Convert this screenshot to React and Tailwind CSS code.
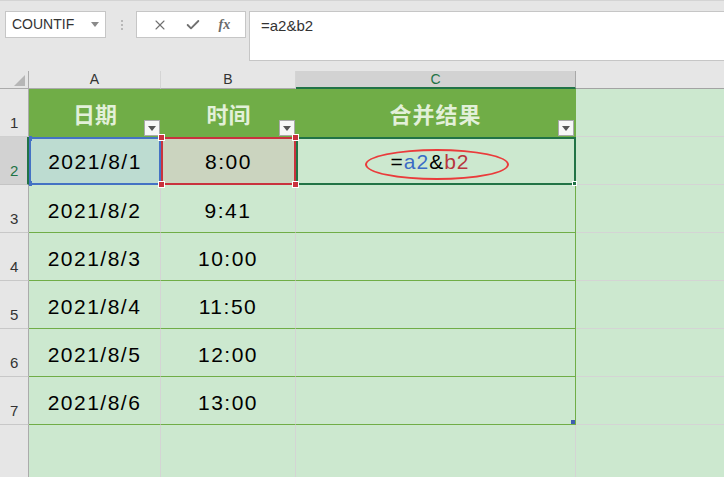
import React from "react";
import { X, Check } from "lucide-react";

const dataRows = [
  ["2021/8/2", "9:41"],
  ["2021/8/3", "10:00"],
  ["2021/8/4", "11:50"],
  ["2021/8/5", "12:00"],
  ["2021/8/6", "13:00"],
];

const FilterButton = () => (
  <div className="absolute right-[1px] bottom-[1px] w-[16px] h-[16px] bg-[#f7f7f7] border border-[#a9a9a9] flex items-center justify-center">
    <svg width="8" height="5" viewBox="0 0 8 5">
      <path d="M0 0h8L4 5z" fill="#555" />
    </svg>
  </div>
);

const RedHandle = ({ pos }) => (
  <div
    className={`absolute ${pos} w-[7px] h-[7px] bg-[#c9323e] border border-white z-20`}
  ></div>
);

const Toolbar = () => (
  <div className="h-[71px] shrink-0 bg-[#e6e6e6] border-t border-[#d4d4d4] flex items-start pt-[10px]">
    {/* name box */}
    <div className="ml-[5px] w-[101px] h-[27px] bg-white border border-[#c6c6c6] flex items-center justify-between pl-[6px] pr-[6px]">
      <span className="text-[14px] text-[#333]">COUNTIF</span>
      <svg width="8" height="5" viewBox="0 0 8 5">
        <path d="M0 0h8L4 5z" fill="#8a8a8a" />
      </svg>
    </div>
    <div className="ml-[15px] h-[27px] flex flex-col justify-center gap-[2px]">
      <div className="w-[2px] h-[2px] bg-[#b8b8b8]"></div>
      <div className="w-[2px] h-[2px] bg-[#b8b8b8]"></div>
      <div className="w-[2px] h-[2px] bg-[#b8b8b8]"></div>
    </div>
    {/* formula buttons */}
    <div className="ml-[13px] w-[110px] h-[27px] bg-white border border-[#c6c6c6] flex items-center justify-around px-[6px] text-[#707070]">
      <X size={16} strokeWidth={1.6} />
      <Check size={16} strokeWidth={2.8} />
      <span className="font-['Liberation_Serif',serif] italic font-bold text-[14px] text-[#6a6a6a]">
        fx
      </span>
    </div>
    {/* formula input */}
    <div className="ml-[3px] flex-1 h-[50px] bg-white border-l border-y border-[#c6c6c6] pl-[11px] pt-[3px] text-[15px] text-[#333]">
      =a2&amp;b2
    </div>
  </div>
);

const Sheet = () => (
  <div className="flex-1 grid grid-cols-[29px_132px_135px_280px_1fr] grid-rows-[18px_48px_48px_48px_48px_48px_48px_48px_1fr] text-[21px] text-black">
    {/* column headers */}
    <div className="bg-[#e6e6e6] border-r border-b border-[#ababab] flex items-end justify-end pr-[3px] pb-[2px]">
      <svg width="11" height="11" viewBox="0 0 11 11">
        <path d="M11 0v11H0z" fill="#b6b6b6" />
      </svg>
    </div>
    <div className="bg-[#e6e6e6] border-r border-[#d4d4d4] border-b-[#ababab] border-b flex items-center justify-center text-[14px] text-[#333]">
      A
    </div>
    <div className="bg-[#e6e6e6] border-r border-[#d4d4d4] border-b-[#ababab] border-b flex items-center justify-center text-[14px] text-[#333]">
      B
    </div>
    <div className="bg-[#d2d2d2] border-r border-r-[#a8a8a8] border-b-2 border-b-[#217346] flex items-center justify-center text-[14px] text-[#217346]">
      C
    </div>
    <div className="bg-[#e6e6e6] border-b border-[#a3a3a3]"></div>

    {/* row 1 */}
    <div className="bg-[#e6e6e6] border-r border-r-[#ababab] border-b border-b-[#d0d0d0] flex items-end pl-[10px] pb-[2px] text-[15px] text-[#333]">
      1
    </div>
    <div className="relative bg-[#70ad47] flex items-center justify-center font-['Noto_Sans_CJK_SC',sans-serif] font-bold text-[22px] text-[#e2f0d9]">
      日期
      <FilterButton />
    </div>
    <div className="relative bg-[#70ad47] flex items-center justify-center font-['Noto_Sans_CJK_SC',sans-serif] font-bold text-[22px] text-[#e2f0d9]">
      时间
      <FilterButton />
    </div>
    <div className="relative bg-[#70ad47] border-r border-[#70ad47] flex items-center justify-center font-['Noto_Sans_CJK_SC',sans-serif] font-bold text-[22px] tracking-[1px] text-[#e2f0d9]">
      合并结果
      <FilterButton />
    </div>
    <div className="border-b border-[#d4d4d4]"></div>

    {/* row 2 (selected) */}
    <div className="bg-[#d2d2d2] border-r-2 border-r-[#217346] border-b border-b-[#c4c4c4] flex items-end pl-[10px] pb-[2px] text-[15px] text-[#217346]">
      2
    </div>
    <div className="relative bg-[#bddcd1] border-2 border-[#4472c4] flex items-center justify-center pt-[2px] tracking-[1.5px]">
      2021/8/1
      <div className="absolute -left-[2px] -top-[3px] w-[3px] h-[5px] bg-[#4472c4]"></div>
      <div className="absolute -left-[2px] -bottom-[3px] w-[3px] h-[5px] bg-[#4472c4]"></div>
    </div>
    <div className="relative bg-[#cbd4bf] border-2 border-[#c9323e] flex items-center justify-center pt-[2px] tracking-[1.5px]">
      8:00
      <RedHandle pos="-left-[5px] -top-[5px]" />
      <RedHandle pos="-right-[5px] -top-[5px]" />
      <RedHandle pos="-left-[5px] -bottom-[5px]" />
      <RedHandle pos="-right-[5px] -bottom-[5px]" />
    </div>
    <div className="relative bg-[#cce8cf] border-2 border-[#217346] flex items-center justify-center pt-[2px] pr-[12px] tracking-[1px]">
      <span>=</span>
      <span className="text-[#3a6cc6]">a2</span>
      <span>&amp;</span>
      <span className="text-[#b8353e]">b2</span>
      <div className="absolute left-[67px] top-[10px] w-[144px] h-[31px] rounded-[50%] border-[2.5px] border-[#ea3b3b]"></div>
      <div className="absolute -right-[3px] -bottom-[3px] w-[5px] h-[5px] bg-[#217346] border border-white z-20"></div>
    </div>
    <div className="border-b border-[#d4d4d4]"></div>

    {/* rows 3-7 */}
    {dataRows.map(([date, time], i) => (
      <React.Fragment key={date}>
        <div className="bg-[#e6e6e6] border-r border-r-[#ababab] border-b border-b-[#c8c8c8] flex items-end pl-[10px] pb-[2px] text-[15px] text-[#333]">
          {i + 3}
        </div>
        <div className="border-r border-r-[#d4d4d4] border-b border-b-[#70ad47] flex items-center justify-center pt-[4px] tracking-[1.5px]">
          {date}
        </div>
        <div className="border-r border-r-[#d4d4d4] border-b border-b-[#70ad47] flex items-center justify-center pt-[4px] tracking-[1.5px]">
          {time}
        </div>
        <div className="relative border-r border-r-[#70ad47] border-b border-b-[#70ad47]">
          {i === dataRows.length - 1 && (
            <div className="absolute right-0 bottom-0 w-[4px] h-[4px] bg-[#3f5fb0]"></div>
          )}
        </div>
        <div className="border-b border-[#d4d4d4]"></div>
      </React.Fragment>
    ))}

    {/* row 8 (partly visible) */}
    <div className="bg-[#e6e6e6] border-r border-[#ababab]"></div>
    <div className="border-r border-[#d4d4d4]"></div>
    <div className="border-r border-[#d4d4d4]"></div>
    <div className="border-r border-[#d4d4d4]"></div>
    <div></div>
  </div>
);

export default function App() {
  return (
    <div className="w-[724px] h-[477px] overflow-hidden bg-[#cce8cf] flex flex-col font-['Liberation_Sans',sans-serif]">
      <Toolbar />
      <Sheet />
    </div>
  );
}
